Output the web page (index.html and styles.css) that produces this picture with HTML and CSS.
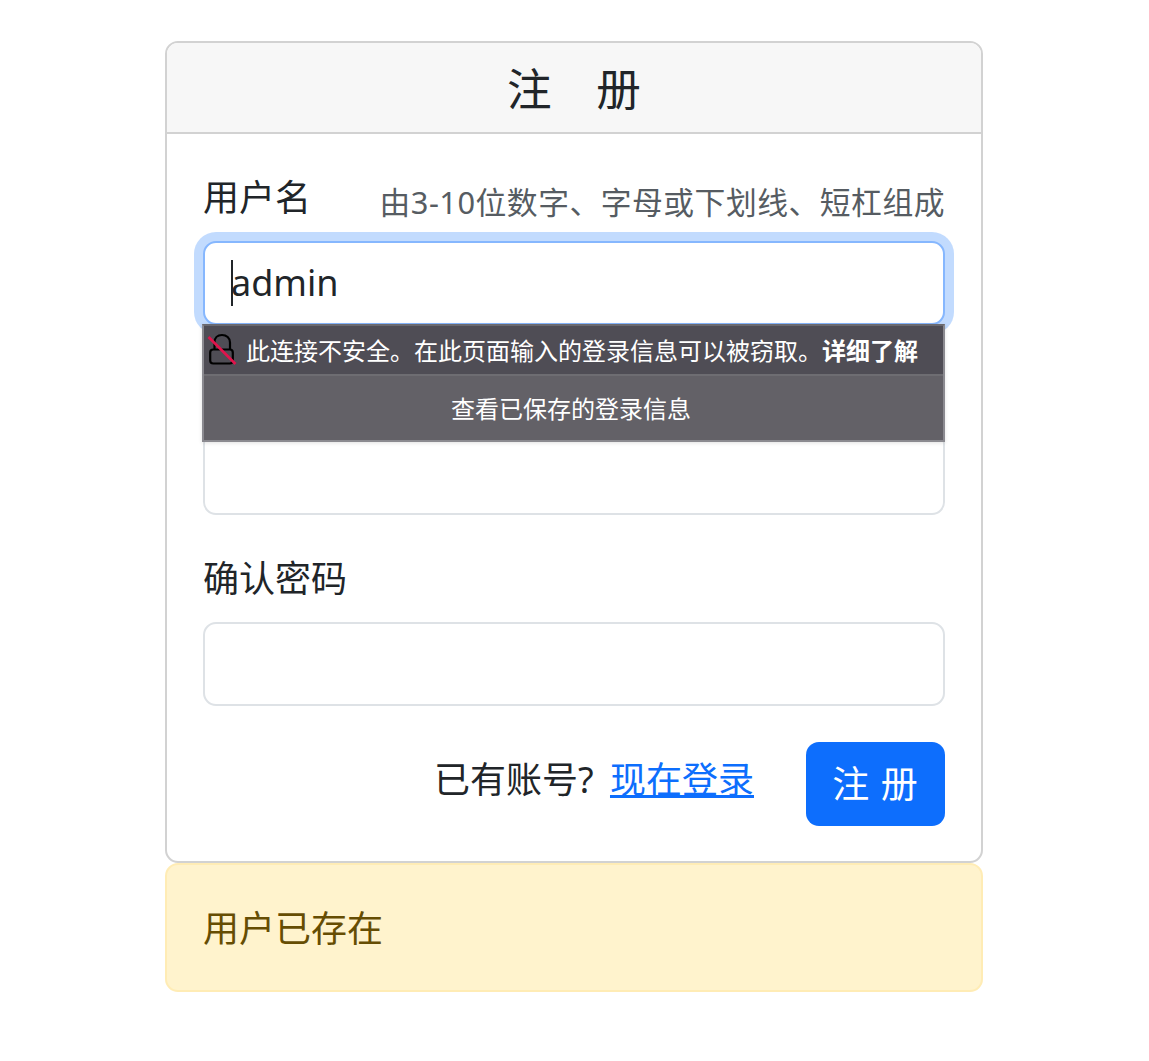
FILE: index.html
```html
<!DOCTYPE html>
<html lang="zh-CN">
<head>
<meta charset="utf-8">
<title>注册</title>
<link rel="stylesheet" href="styles.css">
</head>
<body>
<main class="page">
  <section class="card">
    <header class="card-header">注&emsp;册</header>
    <form class="card-body">
      <div class="group">
        <div class="label-row">
          <label class="label">用户名</label>
          <span class="hint">由3-10位数字、字母或下划线、短杠组成</span>
        </div>
        <div class="field">
          <input class="input focused" type="text" value="admin">
          <span class="caret"></span>
          <div class="popup">
            <div class="popup-warn">
              <svg class="lock" viewBox="0 0 30 32" width="30" height="32" aria-hidden="true">
                <path d="M7.500 17V9.500C7.500 5 10.500 2 15 2S23 5 23 9.500V17" fill="none" stroke="#000" stroke-width="2.200"/>
                <rect x="3.200" y="16.500" width="22.600" height="14" rx="3" fill="none" stroke="#000" stroke-width="2.200"/>
                <path d="M1.500 4L28.500 31" stroke="#e0144c" stroke-width="2.600"/>
              </svg>
              <span>此连接不安全。在此页面输入的登录信息可以被窃取。<b>详细了解</b></span>
            </div>
            <div class="popup-action">查看已保存的登录信息</div>
          </div>
        </div>
      </div>
      <div class="group">
        <div class="label-row"><label class="label">密码</label></div>
        <div class="field"><input class="input" type="password"></div>
      </div>
      <div class="group">
        <div class="label-row"><label class="label">确认密码</label></div>
        <div class="field"><input class="input" type="password"></div>
      </div>
      <div class="actions">
        <span class="login-text">已有账号? <a class="link" href="#">现在登录</a></span>
        <button class="btn" type="button">注 册</button>
      </div>
    </form>
  </section>
  <div class="alert">用户已存在</div>
</main>
</body>
</html>
```
FILE: styles.css
```css
* { box-sizing: border-box; }
html, body { margin: 0; background: #fff; }
body {
  padding-right: 1px;
  font-family: "Noto Sans", "Noto Sans CJK SC", sans-serif;
  font-size: 36px;
  line-height: 1.5;
  color: #212529;
}
.page {
  width: 818px;
  margin: 0 auto;
  padding-top: 41px;
}
.card {
  border: 2px solid #d2d2d2;
  border-radius: 13px;
  background: #fff;
}
.card-header {
  height: 91px;
  background: #f7f7f7;
  border-bottom: 2px solid #d2d2d2;
  border-radius: 11px 11px 0 0;
  text-align: center;
  font-size: 44.6px;
  line-height: 91px;
}
.card-body {
  padding: 35px 36px 35px;
  display: flex;
  flex-direction: column;
}
.group { margin-bottom: 34.4px; }
.label-row {
  display: flex;
  justify-content: space-between;
  align-items: flex-end;
  height: 56px;
  margin-bottom: 16px;
}
.label { line-height: 55px; }
.hint {
  font-size: 30.8px;
  letter-spacing: 0.5px;
  line-height: 46px;
  color: #565c62;
}
.field { position: relative; }
.input {
  display: block;
  width: 100%;
  height: 84px;
  padding: 0 26px 2px;
  border: 2px solid #dee2e6;
  border-radius: 13px;
  background: #fff;
  font: inherit;
  color: #212529;
  outline: none;
}
.focused {
  border-color: #86b7fe;
  box-shadow: 0 0 0 9px rgba(13, 110, 253, 0.25);
}
.caret {
  position: absolute;
  left: 28px;
  top: 19px;
  width: 2px;
  height: 46px;
  background: #212529;
}
.popup {
  position: absolute;
  left: -1px;
  right: 0;
  top: 83px;
  z-index: 2;
  border: 2px solid #8b8a90;
  border-top-color: #6a696f;
  background: #636167;
  color: #fff;
  font-size: 24px;
  line-height: 36px;
  box-shadow: 0 1px 4px rgba(0, 0, 0, 0.12);
}
.popup-warn {
  display: flex;
  align-items: center;
  height: 50px;
  padding: 1px 0 0 3px;
  gap: 9px;
  background: #4f4d55;
  border-bottom: 2px solid #6e6d72;
}
.lock {
  flex: none;
  margin-top: -3px;
}
.popup-action {
  height: 64px;
  line-height: 66px;
  text-align: center;
  padding-right: 5px;
}
.actions {
  display: flex;
  justify-content: flex-end;
  align-items: center;
  gap: 52px;
  margin-top: 1.8px;
}
.login-text { position: relative; top: -4px; }
.link {
  margin-left: 7px;
  color: #0d6efd;
  text-decoration: underline;
}
.btn {
  width: 139px;
  height: 84px;
  padding: 0;
  border: 0;
  border-radius: 13px;
  background: #0d6efd;
  color: #fff;
  font: inherit;
  font-size: 37px;
  letter-spacing: 1px;
}
.alert {
  height: 129px;
  padding: 3px 36px 0;
  display: flex;
  align-items: center;
  border: 2px solid #ffecb5;
  border-radius: 13px;
  background: #fff3cd;
  color: #664d03;
}
```
